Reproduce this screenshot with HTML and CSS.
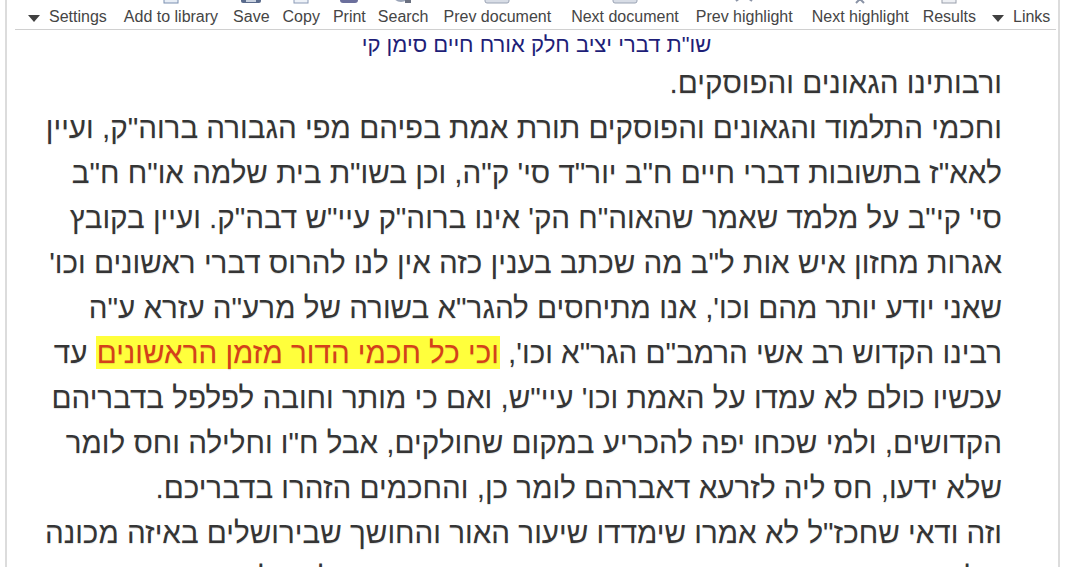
FILE: index.html
```html
<!DOCTYPE html>
<html lang="he">
<head>
<meta charset="utf-8">
<title>שו"ת דברי יציב</title>
<link rel="stylesheet" href="styles.css">
</head>
<body>
<div class="frame">
  <nav class="toolbar">
    <div class="tool tool-menu"><span class="caret"></span><span class="label">Settings</span></div>
    <div class="tool sp-4"><svg class="icon" viewBox="0 0 24 24"><rect x="5" y="2" width="14" height="20" fill="#e8eef6" stroke="#7b8fb0"/></svg><span class="label">Add to library</span></div>
    <div class="tool sp-2"><svg class="icon" viewBox="0 0 24 24"><rect x="2" y="2" width="20" height="20" rx="2" fill="#5a6b8c"/><rect x="7" y="16" width="10" height="5" fill="#c9d2e0"/></svg><span class="label">Save</span></div>
    <div class="tool"><svg class="icon" viewBox="0 0 24 24"><rect x="5" y="2" width="14" height="20" fill="#eef2f8" stroke="#8a9ab6"/></svg><span class="label">Copy</span></div>
    <div class="tool"><svg class="icon" viewBox="0 0 24 24"><rect x="3" y="6" width="18" height="16" rx="3" fill="#6b6f9c"/></svg><span class="label">Print</span></div>
    <div class="tool sp-n1"><svg class="icon" viewBox="0 0 24 24"><circle cx="10" cy="12" r="9" fill="#9aa4b8"/><rect x="14" y="17" width="6" height="5" fill="#6a7080"/></svg><span class="label">Search</span></div>
    <div class="tool sp-2"><svg class="icon wide" viewBox="0 0 32 24"><rect x="4" y="4" width="24" height="18" rx="2" fill="#d8dde6" stroke="#9aa3b4"/></svg><span class="label">Prev document</span></div>
    <div class="tool sp-7"><svg class="icon wide" viewBox="0 0 32 24"><rect x="4" y="4" width="24" height="18" rx="2" fill="#d8dde6" stroke="#9aa3b4"/></svg><span class="label">Next document</span></div>
    <div class="tool sp-4"><svg class="icon" viewBox="0 0 24 24"><path d="M4 20 L12 14 L20 20" fill="none" stroke="#8a93a6" stroke-width="2"/></svg><span class="label">Prev highlight</span></div>
    <div class="tool sp-6"><svg class="icon" viewBox="0 0 24 24"><path d="M8 22 L12 18 L16 22" fill="none" stroke="#8a93a6" stroke-width="2"/></svg><span class="label">Next highlight</span></div>
    <div class="tool sp-1"><svg class="icon" viewBox="0 0 24 24"><rect x="5" y="2" width="14" height="20" fill="#eef0f4" stroke="#9aa0ac"/></svg><span class="label">Results</span></div>
    <div class="tool tool-menu sp-3"><span class="caret"></span><span class="label">Links</span></div>
  </nav>
  <h1 class="doc-title">שו"ת דברי יציב חלק אורח חיים סימן קי</h1>
  <article class="doc-text" dir="rtl">
    <p>ורבותינו הגאונים והפוסקים.</p>
    <p>וחכמי התלמוד והגאונים והפוסקים תורת אמת בפיהם מפי הגבורה ברוה"ק, ועיין<br>
    לאא"ז בתשובות דברי חיים ח"ב יור"ד סי' ק"ה, וכן בשו"ת בית שלמה או"ח ח"ב<br>
    סי' קי"ב על מלמד שאמר שהאוה"ח הק' אינו ברוה"ק עיי"ש דבה"ק. ועיין בקובץ<br>
    אגרות מחזון איש אות ל"ב מה שכתב בענין כזה אין לנו להרוס דברי ראשונים וכו'<br>
    שאני יודע יותר מהם וכו', אנו מתיחסים להגר"א בשורה של מרע"ה עזרא ע"ה<br>
    רבינו הקדוש רב אשי הרמב"ם הגר"א וכו', <mark class="hit">וכי כל חכמי הדור מזמן הראשונים</mark> עד<br>
    עכשיו כולם לא עמדו על האמת וכו' עיי"ש, ואם כי מותר וחובה לפלפל בדבריהם<br>
    הקדושים, ולמי שכחו יפה להכריע במקום שחולקים, אבל ח"ו וחלילה וחס לומר<br>
    שלא ידעו, חס ליה לזרעא דאברהם לומר כן, והחכמים הזהרו בדבריכם.</p>
    <p>וזה ודאי שחכז"ל לא אמרו שימדדו שיעור האור והחושך שבירושלים באיזה מכונה<br>
    שלמדו בזמנם, רק כפי שהיו רואים בעיניהם אור היום, וכל זה לפי המציאות</p>
  </article>
</div>
</body>
</html>
```
FILE: styles.css
```css
html, body {
  margin: 0;
  padding: 0;
  background: #ffffff;
  height: 100%;
  overflow: hidden;
}

.frame {
  width: 1055px;
  margin-left: 5px;
  height: 100%;
  border-left: 2px solid #dcdcdc;
  border-right: 2px solid #dcdcdc;
  box-sizing: border-box;
  overflow: hidden;
}

.toolbar {
  display: flex;
  align-items: flex-end;
  gap: 13px;
  margin: -19px 2px 0 8px;
  padding: 0 0 3px 13px;
  border-bottom: 1px solid #d0d0d0;
  font-family: "Liberation Sans", Arial, sans-serif;
  font-size: 16px;
  color: #454545;
  white-space: nowrap;
}

.sp-n1 { margin-left: -1px; }
.sp-1 { margin-left: 1px; }
.sp-2 { margin-left: 2px; }
.sp-3 { margin-left: 3px; }
.sp-4 { margin-left: 4px; }
.sp-6 { margin-left: 6px; }
.sp-7 { margin-left: 7px; }

.tool {
  display: flex;
  flex-direction: column;
  align-items: center;
}

.tool-menu {
  flex-direction: row;
  align-items: center;
  gap: 9px;
}

.icon {
  width: 24px;
  height: 24px;
  margin-bottom: 3px;
}

.icon.wide {
  width: 32px;
}

.label {
  line-height: 18px;
}

.caret {
  width: 0;
  height: 0;
  border-left: 6px solid transparent;
  border-right: 6px solid transparent;
  border-top: 7px solid #404040;
  margin-top: 2px;
}

.doc-title {
  margin: 3px 0 3px;
  padding-left: 8px;
  text-align: center;
  font-family: "Liberation Sans", Arial, sans-serif;
  font-weight: normal;
  font-size: 22px;
  line-height: 24px;
  color: #1e1e78;
}

.doc-text {
  padding: 0 56px 0 30px;
  font-family: "Liberation Sans", Arial, sans-serif;
  font-size: 29.6px;
  line-height: 45px;
  color: #353535;
  white-space: nowrap;
  text-shadow: 0 1px 1px rgba(0, 0, 0, 0.12);
}

.doc-text p {
  margin: 0;
}

.hit {
  background: #ffff3c;
  color: #d5401a;
  padding: 0 1px;
}
```
